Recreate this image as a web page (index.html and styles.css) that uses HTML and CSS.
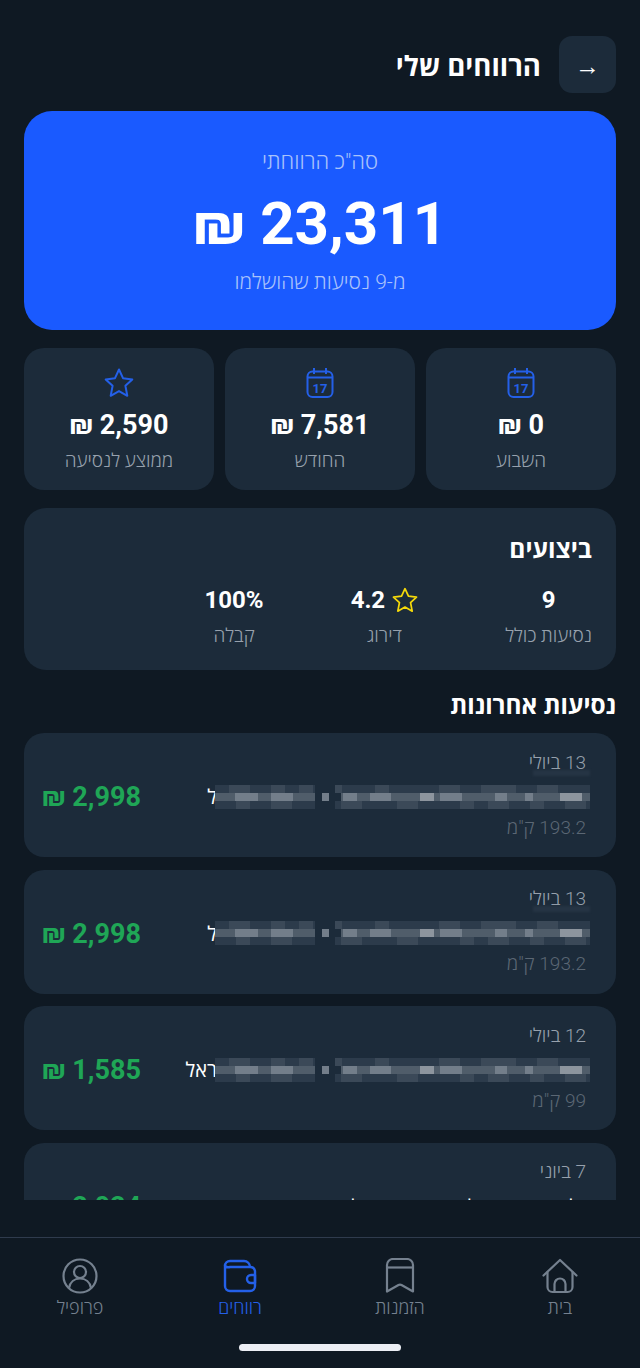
FILE: index.html
```html
<!DOCTYPE html>
<html lang="he" dir="rtl">
<head>
    <meta charset="UTF-8">
    <meta name="viewport" content="width=device-width, initial-scale=1.0">
    <title>הרווחים שלי</title>
    <link rel="stylesheet" href="styles.css">
</head>
<body>
    <!-- pixelated route name, reused on every trip row -->
    <svg class="defs" width="0" height="0">
        <symbol id="mosaic" viewBox="0 0 375 24">
            <g fill="#2c3b4b">
                <rect x="0" y="0" width="100" height="8"/>
                <rect x="120" y="0" width="255" height="8"/>
                <rect x="0" y="16" width="100" height="8"/>
                <rect x="120" y="16" width="255" height="8"/>
            </g>
            <g fill="#3b4958">
                <rect x="14" y="0" width="21" height="8"/>
                <rect x="56" y="0" width="14" height="8"/>
                <rect x="84" y="0" width="14" height="8"/>
                <rect x="120" y="0" width="7" height="8"/>
                <rect x="160" y="0" width="14" height="8"/>
                <rect x="224" y="0" width="21" height="8"/>
                <rect x="266" y="0" width="35" height="8"/>
                <rect x="322" y="0" width="21" height="8"/>
                <rect x="21" y="16" width="14" height="8"/>
                <rect x="56" y="16" width="21" height="8"/>
                <rect x="126" y="16" width="21" height="8"/>
                <rect x="182" y="16" width="21" height="8"/>
                <rect x="245" y="16" width="14" height="8"/>
                <rect x="273" y="16" width="21" height="8"/>
                <rect x="315" y="16" width="14" height="8"/>
                <rect x="350" y="16" width="21" height="8"/>
            </g>
            <g fill="#505d6a">
                <rect x="0" y="8" width="100" height="8"/>
                <rect x="126" y="8" width="249" height="8"/>
            </g>
            <g fill="#737e8a">
                <rect x="20" y="8" width="23" height="8"/>
                <rect x="56" y="8" width="22" height="8"/>
                <rect x="107" y="8" width="7" height="8"/>
                <rect x="128" y="8" width="14" height="8"/>
                <rect x="155" y="8" width="21" height="8"/>
                <rect x="225" y="8" width="22" height="8"/>
                <rect x="280" y="8" width="12" height="8"/>
                <rect x="310" y="8" width="8" height="8"/>
            </g>
            <g fill="#8d959e">
                <rect x="205" y="8" width="14" height="8"/>
                <rect x="345" y="8" width="22" height="8"/>
            </g>
        </symbol>
    </svg>

    <div class="screen">
        <main class="content">
            <header class="top-bar">
                <button class="back">→</button>
                <h1>הרווחים שלי</h1>
            </header>

            <section class="hero">
                <p class="hero-label">סה"כ הרווחתי</p>
                <p class="hero-amount">23,311 ₪</p>
                <p class="hero-note">מ-9 נסיעות שהושלמו</p>
            </section>

            <section class="stats">
                <div class="stat">
                    <svg class="stat-icon" viewBox="0 0 30 30" fill="none" stroke="currentColor" stroke-width="2">
                        <rect x="2.500" y="3.500" width="25" height="25.500" rx="5"/>
                        <path d="M2.500 9.500h25M9 0v6M21 0v6"/>
                        <text x="15" y="24.500" class="cal-day">17</text>
                    </svg>
                    <div class="stat-value">0 ₪</div>
                    <div class="stat-label">השבוע</div>
                </div>
                <div class="stat">
                    <svg class="stat-icon" viewBox="0 0 30 30" fill="none" stroke="currentColor" stroke-width="2">
                        <rect x="2.500" y="3.500" width="25" height="25.500" rx="5"/>
                        <path d="M2.500 9.500h25M9 0v6M21 0v6"/>
                        <text x="15" y="24.500" class="cal-day">17</text>
                    </svg>
                    <div class="stat-value">7,581 ₪</div>
                    <div class="stat-label">החודש</div>
                </div>
                <div class="stat">
                    <svg class="stat-icon" viewBox="0 0 30 30" fill="none" stroke="currentColor" stroke-width="2" stroke-linejoin="round">
                        <path d="M15 1.500l4 8.700 9.300 1.200-6.900 6.400 1.900 10-8.300-4.700-8.300 4.700 1.900-10-6.900-6.400 9.300-1.200z"/>
                    </svg>
                    <div class="stat-value">2,590 ₪</div>
                    <div class="stat-label">ממוצע לנסיעה</div>
                </div>
            </section>

            <section class="performance">
                <h2>ביצועים</h2>
                <div class="perf-row">
                    <div class="perf-item">
                        <div class="perf-value">9</div>
                        <div class="perf-label">נסיעות כולל</div>
                    </div>
                    <div class="perf-item">
                        <div class="perf-value">
                            <svg class="perf-star" viewBox="0 0 30 30" fill="none" stroke="currentColor" stroke-width="2" stroke-linejoin="round">
                                <path d="M15 2l4 8.500 9.300 1.200-6.900 6.400 1.900 9.800-8.300-4.700-8.300 4.700 1.900-9.800-6.900-6.400 9.300-1.200z"/>
                            </svg>
                            <span>4.2</span>
                        </div>
                        <div class="perf-label">דירוג</div>
                    </div>
                    <div class="perf-item">
                        <div class="perf-value">100%</div>
                        <div class="perf-label">קבלה</div>
                    </div>
                </div>
            </section>

            <h2 class="recent-title">נסיעות אחרונות</h2>

            <div class="trip">
                <div class="trip-info">
                    <div class="trip-date smudged">13 ביולי</div>
                    <div class="trip-route"><svg class="mosaic"><use href="#mosaic"/></svg><span>ל</span></div>
                    <div class="trip-km">193.2 ק"מ</div>
                </div>
                <div class="trip-amount">2,998 ₪</div>
            </div>
            <div class="trip">
                <div class="trip-info">
                    <div class="trip-date smudged">13 ביולי</div>
                    <div class="trip-route"><svg class="mosaic"><use href="#mosaic"/></svg><span>ל</span></div>
                    <div class="trip-km">193.2 ק"מ</div>
                </div>
                <div class="trip-amount">2,998 ₪</div>
            </div>
            <div class="trip">
                <div class="trip-info">
                    <div class="trip-date">12 ביולי</div>
                    <div class="trip-route"><svg class="mosaic"><use href="#mosaic"/></svg><span>ראל</span></div>
                    <div class="trip-km">99 ק"מ</div>
                </div>
                <div class="trip-amount">1,585 ₪</div>
            </div>
            <div class="trip">
                <div class="trip-info">
                    <div class="trip-date">7 ביוני</div>
                    <div class="trip-route"><span>תל אביב, ישראל - חיפה, ישראל</span></div>
                    <div class="trip-km">96 ק"מ</div>
                </div>
                <div class="trip-amount">2,024 ₪</div>
            </div>
        </main>

        <nav class="tabs">
            <a class="tab">
                <svg viewBox="0 0 36 36" fill="none" stroke="currentColor" stroke-width="2.200" stroke-linejoin="round" stroke-linecap="round">
                    <path d="M1.500 17.500L18 2l16.500 15.500"/>
                    <path d="M5.500 14v15a5 5 0 0 0 5 5h15a5 5 0 0 0 5-5V14"/>
                    <path d="M12.500 34V26a5.500 5.500 0 0 1 11 0v8"/>
                </svg>
                <span>בית</span>
            </a>
            <a class="tab">
                <svg viewBox="0 0 36 36" fill="none" stroke="currentColor" stroke-width="2.200" stroke-linejoin="round">
                    <path d="M5 7a6 6 0 0 1 6-6h14a6 6 0 0 1 6 6v26.500l-11.500-6.500a3 3 0 0 0-3 0L5 33.500z"/>
                    <path d="M5 9.500h26"/>
                </svg>
                <span>הזמנות</span>
            </a>
            <a class="tab active">
                <svg viewBox="0 0 36 36" fill="none" stroke="currentColor" stroke-width="2.400" stroke-linejoin="round">
                    <path d="M3 8a5 5 0 0 1 5-5h14a6 6 0 0 1 6 6"/>
                    <path d="M3 8v20a5 5 0 0 0 5 5h20a5 5 0 0 0 5-5V13a5 5 0 0 0-5-4H8a5 5 0 0 1-5-1z"/>
                    <path d="M33 17h-4a4 4 0 0 0 0 8h4z"/>
                </svg>
                <span>רווחים</span>
            </a>
            <a class="tab">
                <svg viewBox="0 0 36 36" fill="none" stroke="currentColor" stroke-width="2.200">
                    <circle cx="18" cy="18" r="16.500"/>
                    <circle cx="18" cy="14" r="6"/>
                    <path d="M7 30c1-6 5.500-9.500 11-9.500S28 24 29 30"/>
                </svg>
                <span>פרופיל</span>
            </a>
        </nav>

        <div class="home-bar"></div>
    </div>
</body>
</html>
```

FILE: styles.css
```css
* {
    box-sizing: border-box;
}

body {
    margin: 0;
    background: #0f1923;
    color: #fff;
    font-family: Roboto, "Open Sans", "Noto Sans", sans-serif;
}

p, h1, h2 {
    margin: 0;
}

.defs {
    display: block;
    height: 0;
}

.screen {
    height: 1368px;
    display: flex;
    flex-direction: column;
    overflow: hidden;
}

.content {
    height: 1200px;
    overflow: hidden;
    padding: 36px 24px 0;
}

/* Header */
.top-bar {
    display: flex;
    align-items: center;
    gap: 18px;
    height: 57px;
}

.back {
    width: 57px;
    height: 57px;
    padding: 4px 0 0;
    border: 0;
    border-radius: 13px;
    background: #1c2b3a;
    color: #fff;
    font-family: Roboto, sans-serif;
    font-size: 25px;
}

h1 {
    font-size: 27.600px;
    font-weight: 700;
}

/* Total card */
.hero {
    margin-top: 18px;
    height: 219px;
    padding-top: 38px;
    border-radius: 28px;
    background: #1a5aff;
    text-align: center;
}

.hero-label,
.hero-note {
    font-size: 21px;
    font-weight: 300;
    line-height: 26px;
    color: #a9c2fb;
}

.hero-label {
    font-size: 22px;
}

.hero-amount {
    margin: 15px 0 11px;
    font-size: 60px;
    line-height: 68px;
    font-weight: 700;
}

/* Three small cards */
.stats {
    display: grid;
    grid-template-columns: repeat(3, 1fr);
    gap: 11px;
    margin-top: 18px;
}

.stat {
    height: 142px;
    padding-top: 20px;
    border-radius: 20px;
    background: #1c2b3a;
    text-align: center;
}

.stat-icon {
    display: block;
    width: 30px;
    height: 30px;
    margin: 0 auto;
    color: #2460e8;
    overflow: visible;
}

.cal-day {
    fill: #2460e8;
    stroke: none;
    font-size: 13px;
    font-weight: 700;
    text-anchor: middle;
}

.stat-value {
    margin-top: 9px;
    font-size: 27px;
    line-height: 36px;
    font-weight: 700;
}

.stat-label {
    margin-top: 6px;
    font-size: 19px;
    font-weight: 300;
    line-height: 24px;
    color: #97a1ad;
}

/* Performance */
.performance {
    height: 162px;
    margin-top: 18px;
    padding: 27px 24px 0;
    border-radius: 22px;
    background: #1c2b3a;
}

.performance h2 {
    font-size: 24.500px;
    line-height: 30px;
    font-weight: 700;
}

.perf-row {
    display: flex;
    gap: 87px;
    margin-top: 19px;
}

.perf-item {
    text-align: center;
}

.perf-value {
    display: flex;
    align-items: center;
    justify-content: center;
    gap: 7px;
    height: 32px;
    font-size: 24px;
    font-weight: 700;
}

.perf-star {
    width: 26px;
    height: 26px;
    color: #f5d90a;
}

.perf-label {
    margin-top: 8px;
    font-size: 19px;
    font-weight: 300;
    line-height: 24px;
    color: #97a1ad;
}

/* Trips */
.recent-title {
    margin-top: 21px;
    font-size: 24.400px;
    line-height: 30px;
    font-weight: 700;
}

.trip {
    display: flex;
    align-items: center;
    justify-content: space-between;
    height: 124px;
    margin-top: 12.500px;
    padding: 0 30px 0 18px;
    border-radius: 20px;
    background: #1c2b3a;
}

.recent-title + .trip {
    margin-top: 12px;
}

.trip-date {
    position: relative;
    font-size: 19px;
    font-weight: 300;
    line-height: 24px;
    color: #97a1ad;
}

/* blurred patch that sits over the bottom of the date */
.trip-date.smudged::after {
    content: '';
    position: absolute;
    top: 19px;
    right: -4px;
    width: 57px;
    height: 6px;
    background: #2c3b4b;
    opacity: 0.6;
    filter: blur(1px);
}

.trip-route {
    display: flex;
    align-items: center;
    height: 32px;
    margin: 6px -4px 3px 0;
    font-size: 20px;
}

.trip-route span {
    margin-right: -2px;
}

/* sits above the tail of the route name */
.mosaic {
    display: block;
    position: relative;
    z-index: 1;
    width: 375px;
    height: 24px;
    filter: blur(0.5px);
}

.trip-km {
    font-size: 19px;
    font-weight: 300;
    line-height: 24px;
    color: #5b6774;
}

.trip-amount {
    margin-top: 4px;
    font-size: 27px;
    font-weight: 700;
    color: #1fa656;
}

/* Bottom navigation */
.tabs {
    display: grid;
    grid-template-columns: repeat(4, 1fr);
    margin-top: 37px;
    padding: 20px 0 0 0;
    border-top: 1px solid #2f3b4d;
}

.tab {
    display: flex;
    flex-direction: column;
    align-items: center;
    color: #75818f;
    font-size: 18px;
    font-weight: 300;
}

.tab svg {
    width: 36px;
    height: 36px;
}

.tab span {
    margin-top: 2px;
    line-height: 24px;
}

.tab.active {
    color: #2460e8;
}

.home-bar {
    width: 162px;
    height: 7px;
    margin: 24px auto 0;
    border-radius: 4px;
    background: #eceef4;
}
```
